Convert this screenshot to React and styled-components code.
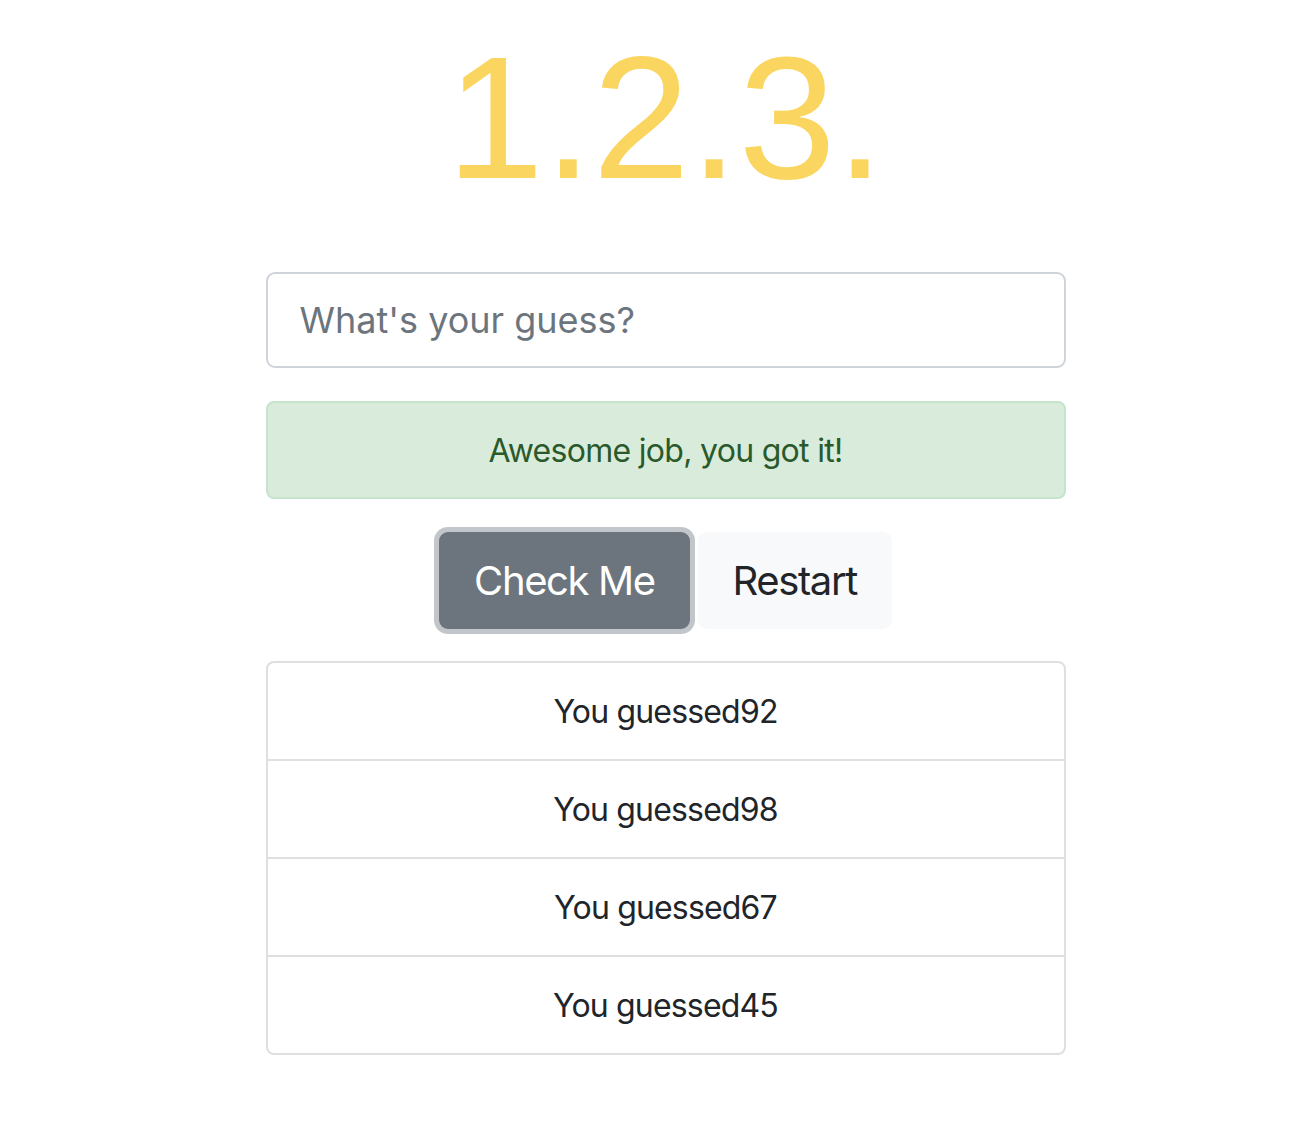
import React from "react";
import styled, { createGlobalStyle } from "styled-components";

const GlobalStyle = createGlobalStyle`
  body {
    margin: 0;
    padding-left: 15px;
    background: #ffffff;
    font-family: Inter, "Liberation Sans", sans-serif;
    color: #212529;
  }
`;

const guesses = [92, 98, 67, 45];

const App = () => (
  <>
    <GlobalStyle />
    <Container>
      <Title>1.2.3.</Title>
      <GuessInput placeholder="What's your guess?" />
      <Alert>Awesome job, you got it!</Alert>
      <ButtonRow>
        <Button variant="secondary" focused>
          Check Me
        </Button>
        <Button variant="light">Restart</Button>
      </ButtonRow>
      <List>
        {guesses.map((g) => (
          <ListItem key={g}>You guessed{g}</ListItem>
        ))}
      </List>
    </Container>
  </>
);

const Container = styled.div`
  width: 800px;
  margin: 0 auto;
  display: flex;
  flex-direction: column;
`;

const Title = styled.h1`
  margin: 13px 0 49px;
  font-family: "Liberation Sans", Arial, sans-serif;
  font-weight: 400;
  font-size: 175px;
  line-height: 1.2;
  color: #fad55f;
  text-align: center;
`;

const GuessInput = styled.input`
  box-sizing: border-box;
  width: 100%;
  height: 96px;
  padding: 16px 32px;
  border: 2px solid #ced4da;
  border-radius: 9px;
  font-family: inherit;
  font-size: 36px;
  color: #495057;
  outline: none;

  &::placeholder {
    color: #6c757d;
  }
`;

const Alert = styled.div`
  box-sizing: border-box;
  margin-top: 33px;
  height: 98px;
  display: flex;
  align-items: center;
  justify-content: center;
  background: #d9ecdc;
  border: 2px solid #c6e4cc;
  border-radius: 8px;
  color: #2a5a2b;
  font-size: 32px;
  letter-spacing: -0.022em;
`;

const ButtonRow = styled.div`
  margin-top: 33px;
  display: flex;
  justify-content: center;
  gap: 8px;
`;

const Button = styled.button`
  box-sizing: border-box;
  height: 97px;
  padding: 0 33px;
  border: 2px solid
    ${({ variant }) => (variant === "secondary" ? "#6c757d" : "#f8f9fa")};
  border-radius: 9px;
  background: ${({ variant }) =>
    variant === "secondary" ? "#6c757d" : "#f8f9fa"};
  color: ${({ variant }) => (variant === "secondary" ? "#ffffff" : "#212529")};
  font-family: inherit;
  font-size: 40px;
  letter-spacing: -0.035em;
  box-shadow: ${({ focused }) => (focused ? "0 0 0 5px #c2c6ca" : "none")};
`;

const List = styled.div`
  margin-top: 32px;
  border: 2px solid #dfdfdf;
  border-radius: 8px;
  overflow: hidden;
`;

const ListItem = styled.div`
  height: 96px;
  display: flex;
  align-items: center;
  justify-content: center;
  font-size: 32px;
  letter-spacing: -0.026em;
  color: #212529;

  & + & {
    border-top: 2px solid #dfdfdf;
  }
`;

export default App;
